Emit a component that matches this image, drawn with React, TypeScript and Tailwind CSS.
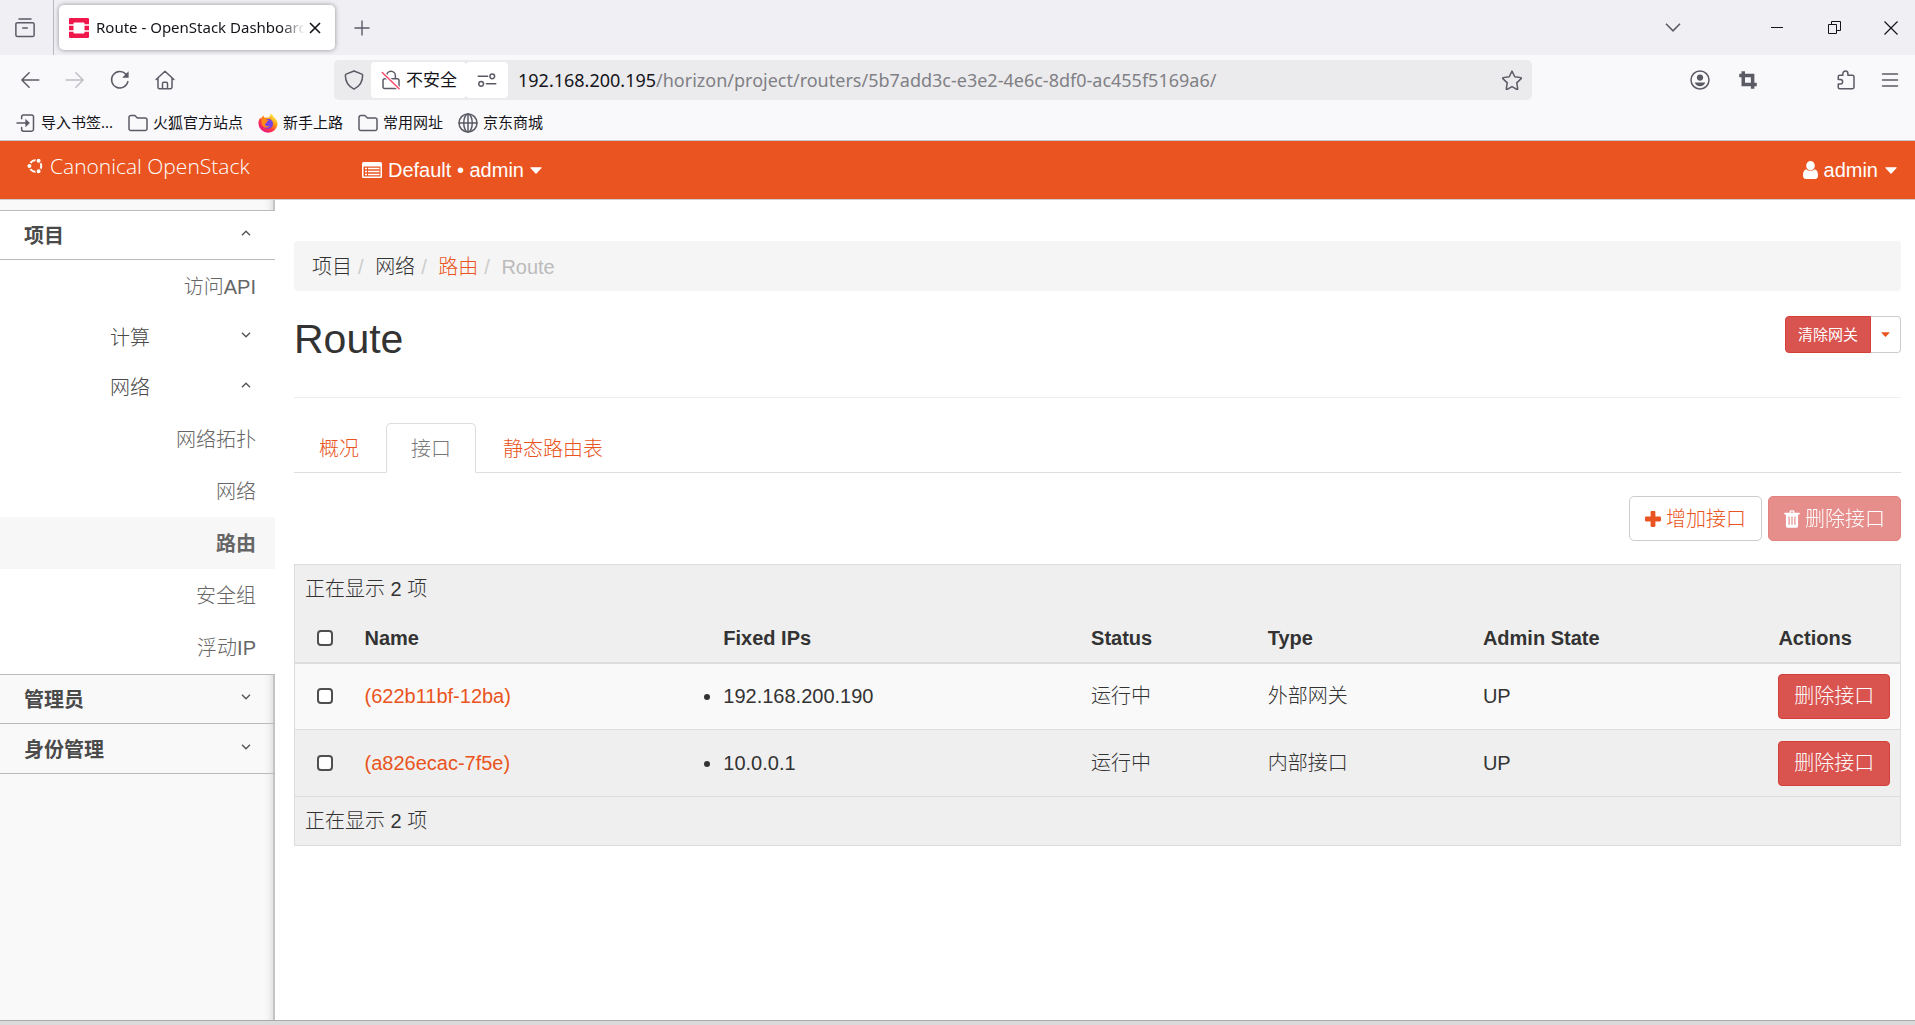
import React, { useState } from 'react';

const bookmarks = [
  { label: '导入书签...', icon: 'import' },
  { label: '火狐官方站点', icon: 'folder' },
  { label: '新手上路', icon: 'firefox' },
  { label: '常用网址', icon: 'folder' },
  { label: '京东商城', icon: 'globe' },
];

const networkPanels = ['网络拓扑', '网络', '路由', '安全组', '浮动IP'];

const tabs = ['概况', '接口', '静态路由表'];

const ports = [
  { name: '(622b11bf-12ba)', ip: '192.168.200.190', status: '运行中', type: '外部网关', state: 'UP' },
  { name: '(a826ecac-7f5e)', ip: '10.0.0.1', status: '运行中', type: '内部接口', state: 'UP' },
];

type LineIconProps = { children: React.ReactNode; className?: string };

// 16-unit stroke icons, used all over the browser chrome
function LineIcon({ children, className = 'w-5 h-5' }: LineIconProps) {
  return (
    <svg
      viewBox="0 0 16 16"
      className={`shrink-0 ${className}`}
      fill="none"
      stroke="currentColor"
      strokeWidth="1.2"
      strokeLinecap="round"
      strokeLinejoin="round"
      aria-hidden="true"
    >
      {children}
    </svg>
  );
}

function Caret({ className = '' }: { className?: string }) {
  return (
    <svg viewBox="0 0 12 7" className={`shrink-0 ${className}`} fill="currentColor" aria-hidden="true">
      <path d="M.8.3h10.4c.5 0 .7.5.4.8L6.5 6.500a.7.7 0 0 1-1 0L.4 1.100C.1.8.3.3.8.3z" />
    </svg>
  );
}

function Angle({ up }: { up?: boolean }) {
  return (
    <svg viewBox="0 0 10 6" className="w-[10px] h-[6px] mb-[6px] shrink-0" fill="none" stroke="#555" strokeWidth="1.4" aria-hidden="true">
      <path d={up ? 'M1 5.200 5 1.200l4 4' : 'M1 .8l4 4 4-4'} />
    </svg>
  );
}

function BookmarkIcon({ name }: { name: string }) {
  if (name === 'import') {
    return (
      <LineIcon>
        <path d="M4.500 4.500V3A1.500 1.500 0 0 1 6 1.500h6.500A1.500 1.500 0 0 1 14 3v10a1.500 1.500 0 0 1-1.500 1.500H6A1.500 1.500 0 0 1 4.500 13v-1.500M.8 8h8" />
        <path d="M7.500 4.600l3.600 3.400-3.600 3.400z" fill="currentColor" stroke="none" />
      </LineIcon>
    );
  }
  if (name === 'folder') {
    return (
      <LineIcon>
        <path d="M.8 12.500v-9A1.500 1.500 0 0 1 2.300 2h3.200l2 2h6.200a1.500 1.500 0 0 1 1.500 1.500v7a1.500 1.500 0 0 1-1.500 1.500H2.300a1.500 1.500 0 0 1-1.500-1.500z" />
      </LineIcon>
    );
  }
  if (name === 'globe') {
    return (
      <LineIcon>
        <circle cx="8" cy="8" r="7.200" />
        <ellipse cx="8" cy="8" rx="3.400" ry="7.200" />
        <path d="M.8 8h14.400M8 .8v14.400" />
      </LineIcon>
    );
  }
  return (
    <svg viewBox="0 0 20 20" className="w-5 h-5 shrink-0" aria-hidden="true">
      <defs>
        <linearGradient id="fox" x1="0.85" y1="0.1" x2="0.2" y2="0.95">
          <stop offset="0" stopColor="#fff44f" />
          <stop offset="0.35" stopColor="#ff980e" />
          <stop offset="0.65" stopColor="#ff3647" />
          <stop offset="1" stopColor="#e31587" />
        </linearGradient>
      </defs>
      <path
        d="M13 .5c1.500 1.200 2.200 2.500 2.500 3.600 2.500 1.600 4.100 4.100 4.100 7A9.300 9.300 0 0 1 10.200 19.700 9.600 9.600 0 0 1 .4 10.500c0-2.300.7-4.400 2.100-6 .1.700.3 1.200.6 1.500C3.600 4.500 4.500 3.300 5.500 2.600c0 1 .4 1.700 1 2.200 1-.4 3-.5 4.200 0C11.500 3.500 12.300 2.200 13 .5z"
        fill="url(#fox)"
      />
      <path d="M10 5.800a5 5 0 1 1-5 5.200c1.200.4 1.800-.3 2.700-.9 1-.6 1.200-.8.900-1.700C8 7.400 8.600 6.300 10 5.800z" fill="#7542e5" />
      <path d="M3.500 6.500C5 5.400 7.300 5.600 8.200 6.800l2.300.3c.3.900-1.900 1.300-2 2.200 0 1-1.500 1.300-1.700 2.200.7 2 3.400 2.300 5 .9-.7 2.900-6.700 3.300-8-1.200-.4-1.600-.5-3.200-.3-4.700z" fill="#ff8a16" />
    </svg>
  );
}

function BrowserChrome() {
  return (
    <header className="font-['Noto_Sans','Noto_Sans_CJK_SC',sans-serif] text-[#15141a]">
      {/* Tab strip */}
      <div className="h-[55px] bg-[#f0eff4] flex items-center">
        <div className="w-[54px] h-full border-r border-[#b8b8c0] flex items-center pl-[15px]">
          <button aria-label="Firefox View" className="text-[#5b5b66]">
            <LineIcon>
              <path d="M3.200 .8h9.600M2 3.700h12a1.300 1.300 0 0 1 1.300 1.300v8.500a1.300 1.300 0 0 1-1.300 1.300H2A1.300 1.300 0 0 1 .7 13.500V5A1.300 1.300 0 0 1 2 3.700zM6.200 8h3.600" />
            </LineIcon>
          </button>
        </div>
        <div className="ml-[5px] w-[276px] h-[45px] rounded-[5px] bg-white shadow-[0_0_5px_rgba(0,0,0,0.4)] flex items-center pl-[10px] pr-[14px]">
          <svg viewBox="0 0 20 20" className="w-5 h-5 shrink-0" fill="#f0184a" aria-hidden="true">
            <path d="M1.200 0h17.600A1.200 1.200 0 0 1 20 1.200V6.300h-4.500V5.200a.8.8 0 0 0-.8-.8H5.300a.8.8 0 0 0-.8.8v1.100H0V1.200A1.200 1.200 0 0 1 1.200 0zM0 13.700h4.500v1.100c0 .4.400.8.8.8h9.400c.4 0 .8-.4.8-.8v-1.100H20v5.100a1.200 1.200 0 0 1-1.200 1.200H1.200A1.200 1.200 0 0 1 0 18.800zM0 7.700h4.500v4.600H0zM15.500 7.700H20v4.600h-4.500z" />
          </svg>
          <span className="ml-[7px] flex-1 text-[15px] whitespace-nowrap overflow-hidden [mask-image:linear-gradient(to_left,transparent,black_24px)]">
            Route - OpenStack Dashboard
          </span>
          <button aria-label="关闭标签页" className="ml-1">
            <svg viewBox="0 0 12 12" className="w-3 h-3" stroke="currentColor" strokeWidth="1.6" aria-hidden="true">
              <path d="M1 1l10 10M11 1L1 11" />
            </svg>
          </button>
        </div>
        <button aria-label="新标签页" className="ml-[19px] text-[#5b5b66]">
          <svg viewBox="0 0 16 16" className="w-4 h-4" stroke="currentColor" strokeWidth="1.4" aria-hidden="true">
            <path d="M8 .5v15M.5 8h15" />
          </svg>
        </button>
        <div className="ml-auto flex items-center pr-[17px]">
          <button aria-label="列出所有标签页" className="mr-[90px] text-[#5b5b66]">
            <svg viewBox="0 0 16 9" className="w-4 h-[9px]" fill="none" stroke="currentColor" strokeWidth="1.6" aria-hidden="true">
              <path d="M1 .8l7 7 7-7" />
            </svg>
          </button>
          <button aria-label="最小化" className="mr-[45px]">
            <svg viewBox="0 0 12 12" className="w-3 h-3" stroke="currentColor" aria-hidden="true">
              <path d="M0 5.500h12" />
            </svg>
          </button>
          <button aria-label="还原" className="mr-[43px]">
            <svg viewBox="0 0 13 13" className="w-[13px] h-[13px]" fill="none" stroke="currentColor" aria-hidden="true">
              <path d="M.5 3.500h8v9h-8zM3.500 3.500v-3h9v9h-4" />
            </svg>
          </button>
          <button aria-label="关闭">
            <svg viewBox="0 0 14 14" className="w-[14px] h-[14px]" stroke="currentColor" strokeWidth="1.200" aria-hidden="true">
              <path d="M.5.5l13 13M13.500.5l-13 13" />
            </svg>
          </button>
        </div>
      </div>

      {/* Navigation bar */}
      <div className="h-[50px] bg-[#f9f9fb] flex items-center pl-5 pr-[15px] text-[#5b5b66]">
        <div className="flex items-center gap-[25px] w-[314px]">
          <button aria-label="后退">
            <LineIcon><path d="M15 8H1.500M7.300 2.200 1.500 8l5.800 5.800" /></LineIcon>
          </button>
          <button aria-label="前进" className="text-[#bebec4]">
            <LineIcon><path d="M1 8h13.500M8.700 2.200 14.500 8l-5.800 5.800" /></LineIcon>
          </button>
          <button aria-label="刷新">
            <LineIcon>
              <path d="M14.300 9.300A6.600 6.600 0 1 1 12.700 3.300" />
              <path d="M14.900 1v5.200h-5.200z" fill="currentColor" stroke="none" />
            </LineIcon>
          </button>
          <button aria-label="主页">
            <LineIcon>
              <path d="M.9 7.600 8 1l7.100 6.600M2.400 6.500v7.200a1.200 1.200 0 0 0 1.200 1.200h8.800a1.200 1.200 0 0 0 1.200-1.200V6.500M6 14.700v-4a1 1 0 0 1 1-1h2a1 1 0 0 1 1 1v4" />
            </LineIcon>
          </button>
        </div>

        <div className="w-[1198px] h-10 shrink bg-[#ebebed] rounded-[5px] flex items-center pl-[10px] pr-[10px]">
          <LineIcon><path d="M8 .8l6.300 2.500c.4.200.6.500.6.900C15 9 12.500 13 8 15.300 3.500 13 1 9 1.100 4.200c0-.4.200-.7.600-.9z" /></LineIcon>
          <button className="ml-[7px] h-9 bg-white rounded-[4px] pl-[10px] pr-[9px] flex items-center gap-[5px] text-[17px] text-[#15141a]">
            <LineIcon className="w-5 h-5 text-[#5b5b66]">
              <path d="M4.500 7V4.500a3.500 3.500 0 0 1 7 0V7M2.800 7h10.400a1.200 1.200 0 0 1 1.200 1.200v5.300a1.200 1.200 0 0 1-1.200 1.200H2.800a1.200 1.200 0 0 1-1.200-1.200V8.200A1.200 1.200 0 0 1 2.800 7z" />
              <path d="M1 2l13.500 13" stroke="white" strokeWidth="3" />
              <path d="M1 2l13.500 13" stroke="#ff4f6f" strokeWidth="1.300" />
            </LineIcon>
            不安全
          </button>
          <button aria-label="权限" className="h-9 bg-white rounded-[4px] px-[11px]">
            <LineIcon>
              <path d="M1 5h7.500M7.500 11H15" />
              <circle cx="12.200" cy="5" r="1.900" />
              <circle cx="3.300" cy="11" r="1.900" />
            </LineIcon>
          </button>
          <span className="ml-[10px] text-[18px] text-[#15141a]">192.168.200.195</span>
          <input
            aria-label="地址栏"
            className="flex-1 min-w-0 bg-transparent text-[18px] text-[#808085] outline-none"
            defaultValue="/horizon/project/routers/5b7add3c-e3e2-4e6c-8df0-ac455f5169a6/"
          />
          <button aria-label="收藏">
            <LineIcon>
              <path d="M8 .9l2.200 4.500 4.900.7c.4.100.5.500.2.800l-3.500 3.400.8 4.800c.1.400-.3.600-.6.500L8 13.300l-4 2.300c-.3.100-.7-.1-.6-.5l.8-4.800L.7 6.900c-.3-.3-.2-.7.2-.8l4.900-.7z" />
            </LineIcon>
          </button>
        </div>

        <div className="ml-auto flex items-center">
          <button aria-label="账户" className="mr-7">
            <LineIcon>
              <circle cx="8" cy="8" r="7.200" />
              <circle cx="8" cy="6" r="2.500" fill="currentColor" stroke="none" />
              <path d="M3.800 10h8.400c-.6 1.900-2.200 3-4.200 3s-3.600-1.100-4.200-3z" fill="currentColor" stroke="none" />
            </LineIcon>
          </button>
          <button aria-label="截图" className="mr-[78px]">
            <LineIcon>
              <path d="M4.200 1v10.500H15M1 4.300h10.700V15" strokeWidth="2.800" strokeLinecap="butt" strokeLinejoin="miter" />
            </LineIcon>
          </button>
          <button aria-label="扩展" className="mr-6">
            <LineIcon>
              <path d="M5.500 4.200V2.800a2 2 0 0 1 4 0v1.400h3.700a1.200 1.200 0 0 1 1.200 1.200v8.300a1.200 1.200 0 0 1-1.200 1.200H3a1.200 1.200 0 0 1-1.200-1.200v-2.500h1.700a1.800 1.800 0 0 0 0-3.600H1.800V5.400A1.200 1.200 0 0 1 3 4.200z" />
            </LineIcon>
          </button>
          <button aria-label="菜单">
            <LineIcon><path d="M2 3.200h12M2 8h12M2 12.800h12" /></LineIcon>
          </button>
        </div>
      </div>

      {/* Bookmarks */}
      <nav className="h-9 bg-[#f9f9fb] border-b border-[#c5c6ce] flex items-center gap-[15px] pl-4 text-[15px]">
        {bookmarks.map((b) => (
          <a key={b.label} href="#" className="flex items-center gap-[5px] whitespace-nowrap">
            <span className="text-[#5b5b66]"><BookmarkIcon name={b.icon} /></span>
            {b.label}
          </a>
        ))}
      </nav>
    </header>
  );
}

function Navbar() {
  return (
    <div className="h-[59px] bg-[#e95420] border-b border-[#ccc] text-white flex items-center pr-[18px]">
      <a href="#" className="w-[362px] pl-[27px] pb-2 flex items-center gap-[7px] font-['Open_Sans',sans-serif] font-light text-[21px]">
        <svg viewBox="0 0 16 16" className="w-4 h-4 shrink-0" aria-hidden="true">
          <circle cx="8.500" cy="8" r="5.800" fill="none" stroke="white" strokeWidth="2" />
          <g fill="white" stroke="#e95420" strokeWidth="1.200">
            <circle cx="2.400" cy="8" r="2.600" />
            <circle cx="11.600" cy="2.800" r="2.600" />
            <circle cx="11.600" cy="13.200" r="2.600" />
          </g>
        </svg>
        Canonical OpenStack
      </a>
      <button className="flex items-center">
        <svg viewBox="0 0 20 16" className="w-5 h-4" aria-hidden="true">
          <rect width="20" height="16" rx="1.500" fill="white" />
          <path d="M1.500 4.500h17v10h-17z" fill="#e95420" />
          <path d="M3 6.500h2M3 9.500h2M3 12.500h2M6 6.500h11.500M6 9.500h11.500M6 12.500h11.500" stroke="white" strokeWidth="1.500" />
        </svg>
        <span className="ml-[6px]">Default • admin</span>
        <Caret className="ml-[6px] w-3 h-[7px]" />
      </button>
      <button className="ml-auto flex items-center">
        <svg viewBox="0 0 15 18" className="w-[15px] h-[18px]" fill="currentColor" aria-hidden="true">
          <ellipse cx="7.500" cy="4.700" rx="4.300" ry="4.700" />
          <path d="M3.300 8.200C1 8.800 0 11 0 14.500 0 16.800 1 18 3 18h9c2 0 3-1.200 3-3.500 0-3.500-1-5.700-3.300-6.300-2 2.300-6.400 2.300-8.400 0z" />
        </svg>
        <span className="ml-[6px]">admin</span>
        <Caret className="ml-[7px] w-3 h-[7px]" />
      </button>
    </div>
  );
}

function SidebarLeaf({ label, active }: { label: string; active?: boolean }) {
  return (
    <a
      href="#"
      className={`h-[52px] pt-[2px] flex items-center justify-end pr-[19px] ${
        active ? 'bg-[#f7f7f7] font-bold text-[#666]' : 'text-[#666]'
      }`}
    >
      {label}
    </a>
  );
}

function Sidebar() {
  return (
    <aside className="w-[275px] shrink-0 bg-[#f9f9f9] pt-[10px] text-[#4a4a4a] shadow-[inset_-2px_0_0_#c4c4c4,inset_-10px_0_8px_-8px_#ccc]">
      <div className="bg-white border-t border-[#bbb]">
        <button className="w-full h-[49px] pt-[2px] border-b border-[#bbb] pl-6 pr-6 flex items-center justify-between font-bold">
          项目
          <Angle up />
        </button>
        <SidebarLeaf label="访问API" />
        <button className="w-full h-[50px] pt-[2px] pl-[110px] pr-6 flex items-center justify-between">
          计算
          <Angle />
        </button>
        <button className="w-full h-[50px] pt-[2px] pl-[110px] pr-6 flex items-center justify-between">
          网络
          <Angle up />
        </button>
        <div className="py-px">
          {networkPanels.map((p) => (
            <SidebarLeaf key={p} label={p} active={p === '路由'} />
          ))}
        </div>
      </div>
      <div className="border-y border-[#bbb] divide-y divide-[#bbb]">
        {['管理员', '身份管理'].map((p) => (
          <button key={p} className="w-full h-[49px] pt-[2px] pl-6 pr-6 flex items-center justify-between font-bold">
            {p}
            <Angle />
          </button>
        ))}
      </div>
    </aside>
  );
}

const checkboxClass =
  'block mx-auto appearance-none w-4 h-4 rounded-[4px] border-2 border-[#4f4f4f] bg-white checked:bg-[#e95420]';
const dangerClass = 'bg-[#d9534f] border border-[#d43f3a] text-white';

function PortsTable() {
  return (
    <table className="w-full table-fixed mt-[23px] border border-[#ddd] bg-[#efefef] text-left">
      <colgroup>
        <col className="w-[60px]" />
        <col />
        <col className="w-[22.9%]" />
        <col className="w-[11%]" />
        <col className="w-[13.4%]" />
        <col className="w-[18.4%]" />
        <col className="w-[132px]" />
      </colgroup>
      <thead>
        <tr className="h-[49px]">
          <td colSpan={7} className="px-[10px]">正在显示 2 项</td>
        </tr>
        <tr className="h-[49px] border-b-2 border-[#ddd]">
          <th><input type="checkbox" aria-label="全选" className={checkboxClass} /></th>
          <th className="px-[10px]">Name</th>
          <th className="px-[10px]">Fixed IPs</th>
          <th className="px-[10px]">Status</th>
          <th className="px-[10px]">Type</th>
          <th className="px-[10px]">Admin State</th>
          <th className="px-[10px]">Actions</th>
        </tr>
      </thead>
      <tbody>
        {ports.map((port) => (
          <tr key={port.name} className="h-[67px] border-b border-[#ddd] odd:bg-[#f9f9f9]">
            <td><input type="checkbox" aria-label={port.name} className={checkboxClass} /></td>
            <td className="px-[10px]"><a href="#" className="text-[#e95420]">{port.name}</a></td>
            <td className="px-[10px]">
              <ul className="list-disc"><li>{port.ip}</li></ul>
            </td>
            <td className="px-[10px]">{port.status}</td>
            <td className="px-[10px]">{port.type}</td>
            <td className="px-[10px]">{port.state}</td>
            <td className="px-[10px]">
              <button className={`w-full h-[45px] rounded-[4px] whitespace-nowrap ${dangerClass}`}>删除接口</button>
            </td>
          </tr>
        ))}
      </tbody>
      <tfoot>
        <tr className="h-[49px]">
          <td colSpan={7} className="px-[10px]">正在显示 2 项</td>
        </tr>
      </tfoot>
    </table>
  );
}

export default function App() {
  const [activeTab, setActiveTab] = useState('接口');

  return (
    <div className="min-h-screen bg-white flex flex-col">
      <BrowserChrome />
      <div className="flex-1 flex flex-col font-['Liberation_Sans','Noto_Sans_CJK_SC',sans-serif] font-light text-[20px] leading-7 text-[#333]">
        <Navbar />
        <div className="flex-1 flex">
          <Sidebar />
          <main className="flex-1 min-w-0 pl-[19px] pr-[14px] pt-[41px]">
            <ol className="h-[50px] pt-[2px] bg-[#f5f5f5] rounded-[4px] flex items-center pl-[18px]">
              <li>项目</li>
              <li><span className="px-[6px] text-[#ccc]">/&nbsp;</span>网络</li>
              <li><span className="px-[6px] text-[#ccc]">/&nbsp;</span><a href="#" className="text-[#e95420]">路由</a></li>
              <li className="text-[#bbb]"><span className="px-[6px] text-[#ccc]">/&nbsp;</span>Route</li>
            </ol>

            <div className="mt-[25px] h-[82px] border-b border-[#eee] flex items-start justify-between">
              <h1 className="text-[41px] leading-[46px]">Route</h1>
              <div className="flex h-[37px] text-[15px]">
                <button className={`w-[86px] rounded-l-[4px] font-normal ${dangerClass}`}>清除网关</button>
                <button aria-label="更多操作" className="w-[30px] rounded-r-[4px] border border-l-0 border-[#ccc] text-[#e95420] flex items-center justify-center">
                  <Caret className="w-[9px] h-[5px]" />
                </button>
              </div>
            </div>

            <div role="tablist" className="mt-[25px] flex gap-[2px] border-b border-[#ddd]">
              {tabs.map((t) => (
                <button
                  key={t}
                  role="tab"
                  aria-selected={t === activeTab}
                  onClick={() => setActiveTab(t)}
                  className={`h-[50px] -mb-px pt-[2px] px-6 border rounded-t-[5px] ${
                    t === activeTab ? 'border-[#ddd] border-b-white bg-white text-[#777]' : 'border-transparent text-[#e95420]'
                  }`}
                >
                  {t}
                </button>
              ))}
            </div>

            <div className="mt-[23px] flex justify-end gap-[6px]">
              <button className="w-[133px] h-[45px] rounded-[5px] border border-[#ccc] text-[#e95420] flex items-center justify-center gap-[5px]">
                <svg viewBox="0 0 16 16" className="w-4 h-4" fill="currentColor" aria-hidden="true">
                  <path d="M6.800 0h2.400c.7 0 1.200.5 1.200 1.200v4.400h4.400c.7 0 1.200.5 1.200 1.200v2.400c0 .7-.5 1.200-1.200 1.200h-4.400v4.400c0 .7-.5 1.200-1.200 1.200H6.800c-.7 0-1.200-.5-1.200-1.200v-4.400H1.200C.5 10.400 0 9.900 0 9.200V6.800c0-.7.5-1.200 1.200-1.200h4.400V1.200C5.600.5 6.100 0 6.800 0z" />
                </svg>
                增加接口
              </button>
              <button disabled className={`w-[133px] h-[45px] rounded-[5px] flex items-center justify-center gap-[5px] opacity-65 ${dangerClass}`}>
                <svg viewBox="0 0 16 18" className="w-4 h-[18px]" fill="currentColor" fillRule="evenodd" aria-hidden="true">
                  <path d="M5.200 2.700 5.800 1A1.300 1.300 0 0 1 7 .2h2A1.300 1.300 0 0 1 10.200 1l.6 1.700h4.500c.3 0 .5.200.5.500v.7c0 .3-.2.500-.5.500h-1.200v11c0 1.400-.8 2.400-1.900 2.400H3.800c-1.100 0-1.900-1-1.900-2.400v-11H.700c-.3 0-.5-.2-.5-.5v-.7c0-.3.2-.5.5-.5zM6.600 2.700h2.800L9 1.500H7zM4.500 6.500v8.200h1.200V6.500zM7.400 6.500v8.200h1.200V6.500zM10.300 6.500v8.200h1.200V6.500z" />
                </svg>
                删除接口
              </button>
            </div>

            <PortsTable />
          </main>
        </div>
      </div>
      <div className="h-[5px] bg-[#dcd9da] border-t border-[#aaa]" />
    </div>
  );
}
